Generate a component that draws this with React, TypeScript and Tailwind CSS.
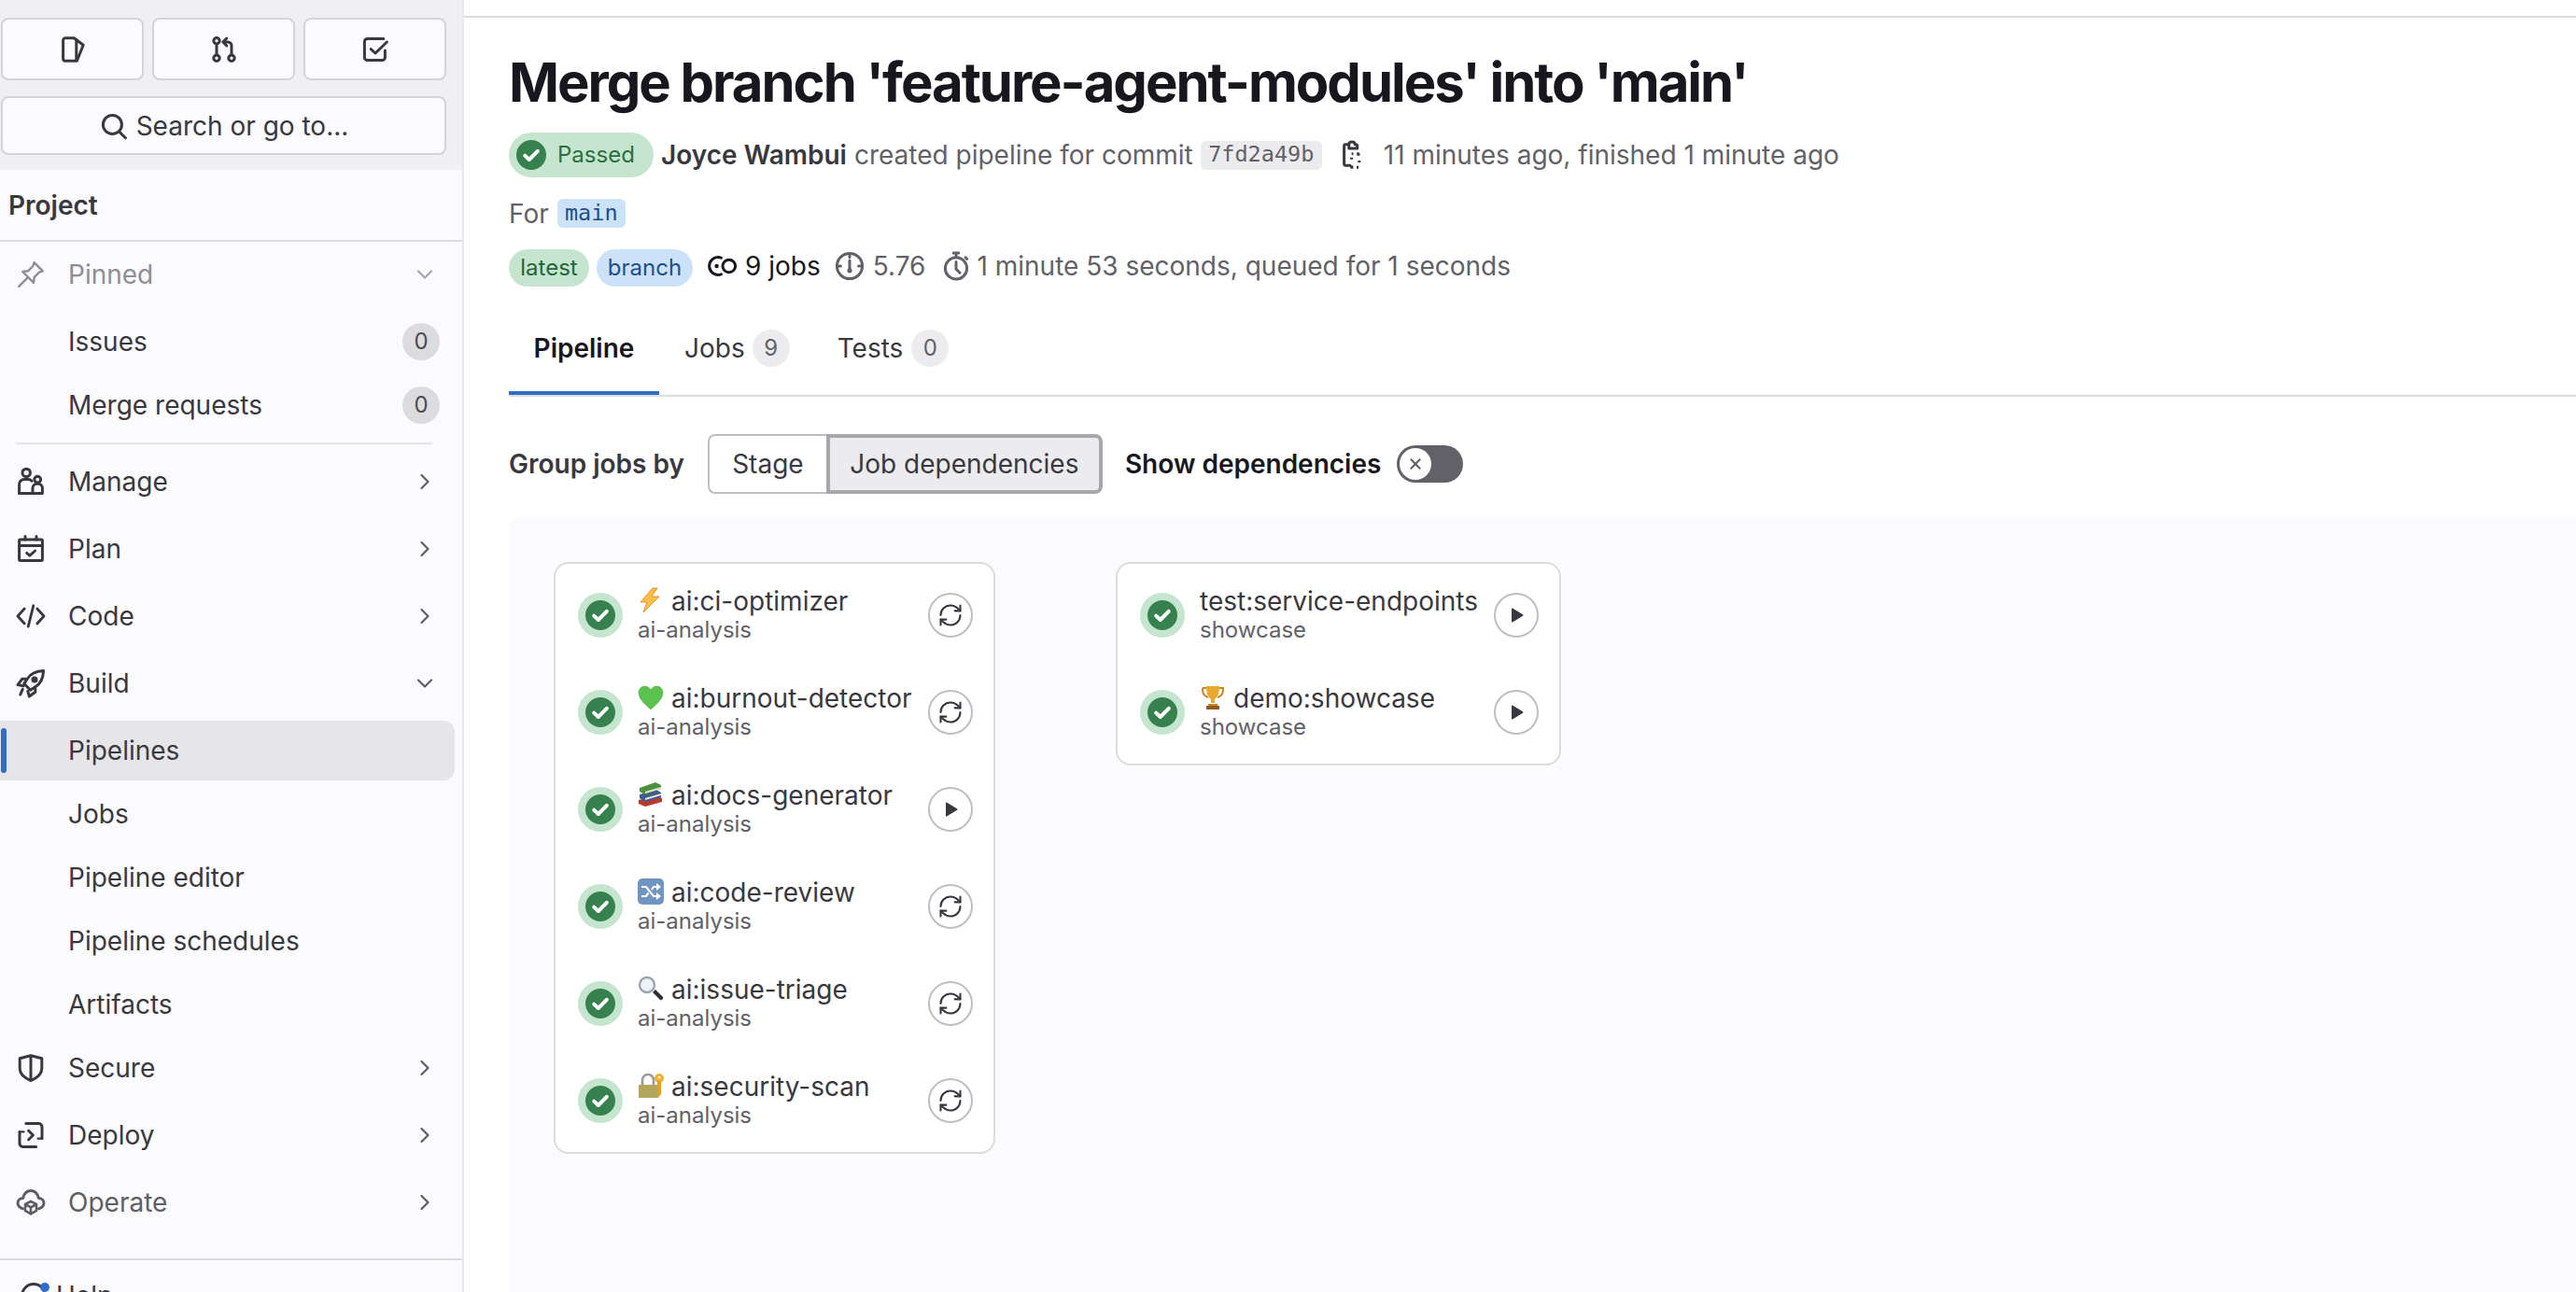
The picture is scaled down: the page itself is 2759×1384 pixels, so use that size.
import type { ReactNode } from "react";
import { RefreshCw } from "lucide-react";

function Ico({ children, className = "w-8 h-8" }: { children: ReactNode; className?: string }) {
  return (
    <svg viewBox="0 0 16 16" fill="none" stroke="currentColor" strokeWidth={1.5} strokeLinecap="round" strokeLinejoin="round" className={`shrink-0 ${className}`}>
      {children}
    </svg>
  );
}

const navIcons: Record<string, ReactNode> = {
  Pinned: (
    <>
      <path d="M9.800 1.600l4.600 4.600-1.900.6-2.600 2.600-.4 3-5.900-5.900 3-.4 2.600-2.600z" strokeWidth={1.2} />
      <path d="M6.200 9.800L1.600 14.400" strokeWidth={1.2} />
    </>
  ),
  Manage: (
    <>
      <circle cx="5.600" cy="3.200" r="2.100" />
      <path d="M1.800 14.200V9.400a2.600 2.600 0 0 1 2.600-2.600h2.200c.8 0 1.400.3 1.900.8" />
      <circle cx="11.600" cy="6.800" r="1.700" />
      <path d="M1.800 14.200h12.400v-2.800a2.300 2.300 0 0 0-2.300-2.300h-.6a2.300 2.300 0 0 0-2.300 2.300v2.800" />
    </>
  ),
  Plan: (
    <>
      <rect x="1.800" y="3" width="12.400" height="11.200" rx="0.600" />
      <path d="M5 1.200V3M11 1.200V3M1.800 6.200h12.400M5.800 10.200l1.600 1.400 2.900-2.600" />
    </>
  ),
  Code: <path d="M4.600 4L1 8l3.600 4M11.400 4L15 8l-3.600 4M9.400 2.400L6.600 13.600" strokeWidth={1.4} />,
  Build: (
    <>
      <path d="M14.800 1.200c-4.400.2-7 1.600-8.600 4.300L4.400 8.200l3.400 3.400 2.700-1.800c2.700-1.600 4.100-4.200 4.300-8.600z" />
      <circle cx="10" cy="6" r="1" fill="currentColor" />
      <path d="M5.200 5.600H3.400L1 8.800l3 .6M10.400 10.800v1.800l-3.200 2.400-.8-2.800M3.600 11.200L2.400 14" />
    </>
  ),
  Secure: <path d="M8 1.400l5.900 1.500v5.400c0 3-2.600 5.100-5.900 6.500-3.300-1.400-5.900-3.500-5.900-6.500V2.900L8 1.400zM8 1.400v13.400" />,
  Deploy: (
    <>
      <path d="M2 6.200v6.200a1.800 1.800 0 0 0 1.800 1.800h7M14 9.800V3.600a1.800 1.800 0 0 0-1.800-1.800H5.400" />
      <path d="M6.800 5.600L9.200 8l-2.400 2.400" />
      <path d="M2 6.200h2.200M11.800 9.800H14" strokeWidth={1.2} />
    </>
  ),
  Operate: (
    <>
      <path d="M3.800 11.400C2 10.800 1 9.600 1 8.400c0-1.500 1.200-2.600 2.800-2.700C4.400 3.400 6 1.800 8 1.800s3.600 1.600 4.200 3.900c1.600.1 2.800 1.200 2.800 2.700 0 1.200-1 2.400-2.800 3" />
      <path d="M8 7.400l3 1.600v3.400l-3 1.800-3-1.800V9l3-1.600zM5 9l3 1.700L11 9M8 10.700V14" strokeWidth={1.3} />
    </>
  ),
};

function Chevron({ down = false }: { down?: boolean }) {
  return down ? (
    <svg viewBox="0 0 18 12" fill="none" stroke="currentColor" strokeWidth={2.2} strokeLinecap="round" strokeLinejoin="round" className="w-[18px] h-3">
      <path d="M2 2.500l7 7 7-7" />
    </svg>
  ) : (
    <svg viewBox="0 0 12 18" fill="none" stroke="currentColor" strokeWidth={2.2} strokeLinecap="round" strokeLinejoin="round" className="w-3 h-[18px]">
      <path d="M2.500 2l7 7-7 7" />
    </svg>
  );
}

function NavItem({ label, open, faded }: { label: string; open?: boolean; faded?: boolean }) {
  return (
    <div className={`flex items-center h-16 shrink-0 pl-[17px] ${faded ? "text-[#5f5e65]" : "text-[#3a383f]"}`}>
      <Ico>{navIcons[label]}</Ico>
      <span className="ml-6 flex-1 text-[28px]">{label}</span>
      <span className="w-8 mr-6 flex justify-center text-[#5f5e65]">
        <Chevron down={open} />
      </span>
    </div>
  );
}

function SubItem({ label, count, active }: { label: string; count?: number; active?: boolean }) {
  return (
    <div className={`relative flex items-center h-16 shrink-0 pl-[73px] pr-[16px] text-[28px] text-[#3a383f] rounded-r-xl ${active ? "bg-[#e6e6e8] mr-2" : ""}`}>
      {active && <span className="absolute left-px top-2 bottom-2 w-[6px] rounded-full bg-[#2f6ec7]" />}
      <span className="flex-1">{label}</span>
      {count !== undefined && (
        <span className="w-10 h-10 mr-2 rounded-full bg-[#dcdcde] flex items-center justify-center text-[24px] text-[#4c4b51]">{count}</span>
      )}
    </div>
  );
}

function Sidebar() {
  return (
    <aside className="w-[497px] shrink-0 h-full flex flex-col bg-[#fbfafd] border-r-2 border-[#e9e9ec] overflow-hidden">
      <div className="bg-[#f0f0f2] pl-px pr-[17px] pt-[19px] h-[182px] shrink-0">
        <div className="flex gap-[9px]">
          {[
            <>
              <path d="M4 1.900h4.600l5 3.700-3.400 8.500H4a1.200 1.200 0 0 1-1.200-1.200V3.100A1.200 1.200 0 0 1 4 1.900z" />
              <path d="M9.900 2.800v11" />
            </>,
            <>
              <circle cx="4" cy="3.400" r="1.600" />
              <circle cx="4" cy="12.600" r="1.600" />
              <circle cx="12" cy="12.600" r="1.600" />
              <path d="M4 5v6M12 11V6a2 2 0 0 0-2-2H7.600M9.400 2L7.400 4l2 2" />
            </>,
            <>
              <path d="M13.200 8.500v3.700a1.600 1.600 0 0 1-1.600 1.600H3.800a1.600 1.600 0 0 1-1.600-1.600V3.800a1.600 1.600 0 0 1 1.600-1.600h8.600" />
              <path d="M5.600 7.800l2.400 2.200 6.200-6" />
            </>,
          ].map((g, i) => (
            <div key={i} className="h-[67px] w-[153px] rounded-lg border-2 border-[#d4d4d6] bg-[#fbfafd] flex items-center justify-center text-[#3a383f]">
              <Ico>{g}</Ico>
            </div>
          ))}
        </div>
        <div className="mt-[17px] h-[63px] rounded-lg border-2 border-[#d4d4d6] bg-[#fbfafd] flex items-center justify-center gap-2 text-[28px] text-[#3a383f]">
          <Ico>
            <circle cx="7.200" cy="7.200" r="5" />
            <path d="M10.800 11l3.400 3.400" />
          </Ico>
          Search or go to...
        </div>
      </div>
      <div className="h-[77px] shrink-0 border-b-2 border-[#dcdcde] flex items-center pl-[9px] text-[28px] font-semibold text-[#3a383f]">Project</div>
      <div className="flex items-center h-16 shrink-0 mt-[3px] pl-[17px] text-[#8f8e94]">
        <Ico>{navIcons.Pinned}</Ico>
        <span className="ml-6 flex-1 text-[28px]">Pinned</span>
        <span className="w-8 mr-6 flex justify-center text-[#a5a4a9]">
          <Chevron down />
        </span>
      </div>
      <div className="mt-2 flex flex-col gap-1 shrink-0">
        <SubItem label="Issues" count={0} />
        <SubItem label="Merge requests" count={0} />
      </div>
      <div className="mt-2 ml-[17px] mr-8 h-[2px] shrink-0 bg-[#e4e4e6]" />
      <div className="mt-2 flex flex-col gap-2 shrink-0">
        <NavItem label="Manage" />
        <NavItem label="Plan" />
        <NavItem label="Code" />
        <NavItem label="Build" open />
      </div>
      <div className="mt-2 flex flex-col gap-1 shrink-0">
        <SubItem label="Pipelines" active />
        <SubItem label="Jobs" />
        <SubItem label="Pipeline editor" />
        <SubItem label="Pipeline schedules" />
        <SubItem label="Artifacts" />
      </div>
      <div className="mt-1 flex flex-col gap-2 shrink-0">
        <NavItem label="Secure" />
        <NavItem label="Deploy" />
        <NavItem label="Operate" faded />
      </div>
      <div className="mt-[28px] shrink-0 border-t-2 border-[#dcdcde] pt-[22px] pl-[20px] flex items-start gap-2 text-[28px] text-[#3a383f] relative">
        <span className="absolute left-[43px] top-[24px] w-[10px] h-[10px] rounded-full bg-[#2f6ec7]" />
        <Ico>
          <circle cx="8" cy="8" r="6.200" />
        </Ico>
        <span className="leading-8">Help</span>
      </div>
    </aside>
  );
}

function StatusIcon() {
  return (
    <svg viewBox="0 0 16 16" className="shrink-0 w-8 h-8">
      <circle cx="8" cy="8" r="8" fill="#37814f" />
      <path d="M4.600 8.300l2.300 2.200 4.500-4.600" fill="none" stroke="#fff" strokeWidth={2} strokeLinecap="round" strokeLinejoin="round" />
    </svg>
  );
}

const emojis: Record<string, ReactNode> = {
  bolt: <path d="M16 1L3 16h7l-4 11 17-17h-8l6-9z" fill="#fbbf4a" stroke="#e8912d" strokeWidth={1} />,
  heart: <path d="M14 27C6 20 1 15 1 9c0-4 3-7 6.500-7C10.500 2 13 4 14 6c1-2 3.500-4 6.500-4C24 2 27 5 27 9c0 6-5 11-13 18z" fill="#5cc24e" stroke="#45a83c" strokeWidth={0.5} />,
  books: (
    <>
      <path d="M1 20l19-5 6 3v4l-18 5-7-3z" fill="#b8392f" />
      <path d="M2 14l18-5 5 3v5l-17 5-6-4z" fill="#3d5d8f" />
      <path d="M8 18l17-5v2L8 20z" fill="#ece6d4" />
      <path d="M2 7l17-6 6 3v4L8 14 2 11z" fill="#4d9140" />
      <path d="M8 11l17-5v2L8 13z" fill="#e8e2cf" />
    </>
  ),
  shuffle: (
    <>
      <rect x="0" y="0" width="28" height="28" rx="5" fill="#6f95c0" />
      <path d="M4 9h5l8 10h4M4 19h5l2.500-3.500M15 12l2-3h4" fill="none" stroke="#fff" strokeWidth={2.2} />
      <path d="M20 5l5 4-5 4zM20 15l5 4-5 4z" fill="#fff" />
    </>
  ),
  search: (
    <>
      <path d="M16 18l3-3 8 8c1 1.500-1.500 4-3 3z" fill="#2f2f35" />
      <circle cx="10" cy="10" r="8" fill="#eef3f8" stroke="#9aa5b1" strokeWidth={2.4} />
    </>
  ),
  lock: (
    <>
      <path d="M5 14V8a6 6 0 0 1 12 0v6" fill="none" stroke="#9b9b9b" strokeWidth={2.6} />
      <rect x="1" y="13" width="21" height="14" rx="1" fill="#b3a65c" />
      <circle cx="23" cy="6" r="5" fill="#f2b233" />
      <circle cx="23" cy="5" r="1.500" fill="#fff3cf" />
      <path d="M21 9h4v14l-3 4-1-2 1-2-1-2 1-2-1-2z" fill="#e89f25" />
    </>
  ),
  trophy: (
    <>
      <path d="M3 4h22v2c0 5-3 7-6 8M3 4v2c0 5 3 7 6 8" fill="none" stroke="#c9871f" strokeWidth={2} />
      <path d="M7 2h14c0 8-2 12-5 14v4h-4v-4C9 14 7 10 7 2z" fill="#e8a92e" />
      <path d="M9 21h10v2H9z" fill="#c9871f" />
      <path d="M7 23h14v4H7z" fill="#8e5a24" />
    </>
  ),
};

function Job({ title, stage, emoji, play }: { title: string; stage: string; emoji?: string; play?: boolean }) {
  return (
    <div className="h-[104px] flex items-center pl-6 pr-[22px]">
      <span className="w-12 h-12 shrink-0 rounded-full bg-[#c6e5ce] flex items-center justify-center">
        <StatusIcon />
      </span>
      <div className="ml-4 flex-1 min-w-0">
        <div className="flex items-center h-8 pb-[3px] text-[28px] text-[#3a383f] whitespace-nowrap">
          {emoji && (
            <svg viewBox="0 0 28 28" className="w-7 h-7 mr-2 shrink-0 -mt-[2px]">
              {emojis[emoji]}
            </svg>
          )}
          {title}
        </div>
        <div className="h-7 leading-7 text-[24px] text-[#626168]">{stage}</div>
      </div>
      <span className="w-12 h-12 shrink-0 rounded-full border-2 border-[#bfbfc3] bg-white flex items-center justify-center text-[#3a383f]">
        {play ? (
          <svg viewBox="0 0 14 16" className="w-[14px] h-4 ml-[2px]">
            <path d="M1 1.200a.7.7 0 0 1 1-.6l11 6.700a.8.8 0 0 1 0 1.400L2 15.400a.7.7 0 0 1-1-.6z" fill="currentColor" />
          </svg>
        ) : (
          <RefreshCw size={28} strokeWidth={1.8} />
        )}
      </span>
    </div>
  );
}

function Main() {
  return (
    <main className="flex-1 min-w-0 h-full flex flex-col">
      <div className="h-[19px] shrink-0 border-b-2 border-[#dcdcde]" />
      <div className="pl-12 shrink-0">
        <h1 className="mt-[29px] h-[80px] leading-[80px] text-[58px] font-bold tracking-[-0.035em] text-[#18171d] whitespace-nowrap">
          Merge branch 'feature-agent-modules' into 'main'
        </h1>
        <div className="mt-[14px] flex items-center h-12 text-[28px] text-[#626168] whitespace-nowrap">
          <span className="h-12 w-[155px] rounded-full bg-[#c6e5ce] flex items-center pl-2 text-[24px] text-[#2c6e42]">
            <StatusIcon />
            <span className="ml-3">Passed</span>
          </span>
          <span className="ml-2 font-semibold text-[#3a383f]">Joyce Wambui</span>
          <span className="ml-2">created pipeline for commit</span>
          <span className="ml-2 h-[31px] w-[130px] rounded-md bg-[#ececef] flex items-center justify-center font-[family-name:'DejaVu_Sans_Mono',monospace] text-[23.5px] text-[#626168]">7fd2a49b</span>
          <Ico className="ml-4 w-8 h-8 text-[#3a383f]">
            <path d="M7 13.600H4.600a.8.8 0 0 1-.8-.8V3.200a.8.8 0 0 1 .8-.8H6.400M6.400 2.400c0-1.800 3.200-1.800 3.200 0h.4c.5 0 .8.300.8.800v1.300H6.400V2.400z" />
            <path d="M7.800 7.400h.9M10.600 7.400h.9v1M11.900 11v1M11.500 14.600h-1M8.700 14.600h-.9v-1M7.800 10.400v-1" strokeLinecap="butt" />
          </Ico>
          <span className="ml-[18px]">11 minutes ago, finished 1 minute ago</span>
        </div>
        <div className="mt-[23px] flex items-center h-[31px] text-[28px] text-[#626168]">
          For
          <span className="ml-[9px] h-[31px] w-[73px] rounded-md bg-[#cbe2f9] flex items-center justify-center font-[family-name:'DejaVu_Sans_Mono',monospace] text-[23.5px] text-[#1f4e8c]">main</span>
        </div>
        <div className="mt-[23px] flex items-center h-10 text-[28px] text-[#626168] whitespace-nowrap">
          <span className="h-10 w-[86px] rounded-full bg-[#c6e5ce] flex items-center justify-center text-[24px] text-[#24663b]">latest</span>
          <span className="ml-2 h-10 w-[103px] rounded-full bg-[#cbe2f9] flex items-center justify-center text-[24px] text-[#1f4e8c]">branch</span>
          <div className="flex items-center -mt-1">
            <Ico className="ml-4 w-8 h-8 text-[#18171d]">
              <circle cx="11.400" cy="8" r="3.400" />
              <path d="M7.200 3.600a4.700 4.700 0 1 0 0 8.800" />
              <circle cx="4.800" cy="8" r="1.100" fill="currentColor" stroke="none" />
            </Ico>
            <span className="ml-2 text-[#18171d]">9 jobs</span>
            <Ico className="ml-[15px] w-8 h-8">
              <circle cx="8" cy="8" r="6.800" />
              <path d="M8 1.600v1.600M1.600 8h1.600M12.800 8h1.600M8 5v5" />
              <circle cx="8" cy="10.400" r="1.300" fill="currentColor" stroke="none" />
            </Ico>
            <span className="ml-[9px]">5.76</span>
            <Ico className="ml-[17px] w-8 h-8">
              <circle cx="8" cy="9.200" r="5.800" />
              <path d="M6.600 1h2.800M8 1v2.400M8 5.800v3.800l2 2M13 3.400l.8.800" />
            </Ico>
            <span className="ml-[6px]">1 minute 53 seconds, queued for 1 seconds</span>
          </div>
        </div>
        <div className="flex items-stretch h-[118px] border-b-2 border-[#dcdcde] text-[28px] text-[#3a383f]">
          <div className="w-[161px] border-b-4 border-[#2f6ec7] flex items-center justify-center font-semibold text-[#18171d] pt-5">Pipeline</div>
          <div className="ml-[27px] flex items-center pt-4">
            Jobs
            <span className="ml-[8px] w-10 h-10 rounded-full bg-[#ececef] flex items-center justify-center text-[24px] text-[#626168]">9</span>
          </div>
          <div className="ml-[51px] flex items-center pt-4">
            Tests
            <span className="ml-[9px] w-10 h-10 rounded-full bg-[#ececef] flex items-center justify-center text-[24px] text-[#626168]">0</span>
          </div>
        </div>
        <div className="mt-10 flex items-center h-16 text-[28px] whitespace-nowrap">
          <span className="font-semibold text-[#3a383f]">Group jobs by</span>
          <div className="ml-[25px] flex h-16">
            <span className="w-[127px] rounded-l-lg border-2 border-r-0 border-[#bfbfc3] bg-white flex items-center justify-center text-[#3a383f]">Stage</span>
            <span className="w-[296px] rounded-r-lg border-4 border-[#a7a6ab] bg-[#ececef] flex items-center justify-center text-[#3a383f]">Job dependencies</span>
          </div>
          <span className="ml-6 font-semibold text-[#18171d]">Show dependencies</span>
          <span className="ml-[17px] w-[71px] h-10 rounded-full bg-[#626168] flex items-center pl-[3px]">
            <span className="w-[34px] h-[34px] rounded-full bg-white flex items-center justify-center text-[#626168]">
              <svg viewBox="0 0 12 12" fill="none" stroke="currentColor" strokeWidth={1.8} strokeLinecap="round" className="w-[14px] h-[14px]">
                <path d="M2 2l8 8M10 2l-8 8" />
              </svg>
            </span>
          </span>
        </div>
      </div>
      <div className="mt-6 ml-12 flex-1 bg-[#fbfafd] rounded-tl-2xl pl-12 pt-[49px] flex items-start gap-[129px]">
        <div className="w-[473px] py-[3px] rounded-2xl border-2 border-[#dcdcde] bg-white">
          <Job emoji="bolt" title="ai:ci-optimizer" stage="ai-analysis" />
          <Job emoji="heart" title="ai:burnout-detector" stage="ai-analysis" />
          <Job emoji="books" title="ai:docs-generator" stage="ai-analysis" play />
          <Job emoji="shuffle" title="ai:code-review" stage="ai-analysis" />
          <Job emoji="search" title="ai:issue-triage" stage="ai-analysis" />
          <Job emoji="lock" title="ai:security-scan" stage="ai-analysis" />
        </div>
        <div className="w-[477px] py-[3px] rounded-2xl border-2 border-[#dcdcde] bg-white">
          <Job title="test:service-endpoints" stage="showcase" play />
          <Job emoji="trophy" title="demo:showcase" stage="showcase" play />
        </div>
      </div>
    </main>
  );
}

export default function App() {
  return (
    <div className="h-screen w-full flex overflow-hidden bg-white font-[family-name:Inter,sans-serif]">
      <Sidebar />
      <Main />
    </div>
  );
}
